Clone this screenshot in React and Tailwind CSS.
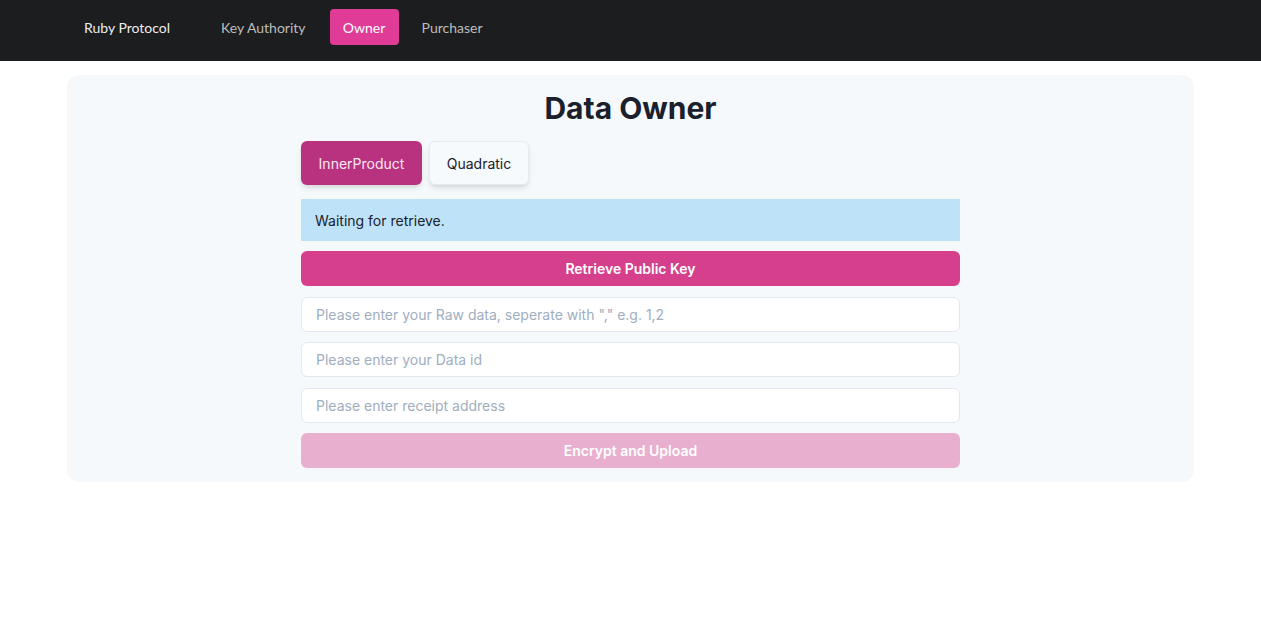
export default function App() {
  return (
    <div className="min-h-[618px] bg-white" style={{ fontFamily: 'Inter, "Liberation Sans", sans-serif' }}>
      <nav className="h-[61px] bg-[#1c1d1f] flex items-start pt-[9px] pl-[84px]" style={{ fontFamily: 'Lato, "Liberation Sans", sans-serif' }}>
        <span className="h-[36px] flex items-center text-[14px] text-[#eeeeee]">Ruby Protocol</span>
        <div className="flex items-center ml-[38px]">
          <a className="px-[13px] h-[36px] flex items-center text-[14px] text-[#bdbdbd]">Key Authority</a>
          <a className="ml-[11px] w-[69px] h-[36px] flex items-center justify-center text-[14px] text-white bg-[#e13b98] rounded-[4px]">Owner</a>
          <a className="ml-[10px] px-[13px] h-[36px] flex items-center text-[14px] text-[#bdbdbd]">Purchaser</a>
        </div>
      </nav>

      <main className="px-[67px] pt-[14px]">
        <div className="bg-[#f5f9fc] rounded-[12px] pt-[14px] pb-[14px] flex flex-col items-center">
          <h1 className="text-[30px] leading-[38px] font-bold text-[#1a202c]">Data Owner</h1>
          <div className="w-[659px] mt-[14px]">
            <div className="flex gap-[7px]">
              <button className="h-[44px] w-[121px] rounded-[6px] bg-[#b83280] text-[#fde8f3] text-[14px] shadow-md">InnerProduct</button>
              <button className="h-[44px] w-[100px] rounded-[6px] bg-[#f7fafc] text-[#1a202c] text-[14px] border border-[#e6ebf1] shadow-md">Quadratic</button>
            </div>
            <div className="mt-[14px] h-[42px] bg-[#bee3f8] flex items-center px-[14px] text-[14px] text-[#1a202c]">Waiting for retrieve.</div>
            <button className="mt-[10px] w-full h-[35px] rounded-[6px] bg-[#d53f8c] text-white text-[14px] font-semibold">Retrieve Public Key</button>
            <input className="mt-[11px] w-full h-[35px] rounded-[6px] bg-white border border-[#e2e8f0] px-[14px] text-[14px] placeholder:text-[#a0aec0] outline-none" placeholder={'Please enter your Raw data, seperate with "," e.g. 1,2'} />
            <input className="mt-[10px] w-full h-[35px] rounded-[6px] bg-white border border-[#e2e8f0] px-[14px] text-[14px] placeholder:text-[#a0aec0] outline-none" placeholder="Please enter your Data id" />
            <input className="mt-[11px] w-full h-[35px] rounded-[6px] bg-white border border-[#e2e8f0] px-[14px] text-[14px] placeholder:text-[#a0aec0] outline-none" placeholder="Please enter receipt address" />
            <button disabled className="mt-[10px] w-full h-[35px] rounded-[6px] bg-[#e8afce] text-white text-[14px] font-semibold cursor-not-allowed">Encrypt and Upload</button>
          </div>
        </div>
      </main>
    </div>
  );
}
